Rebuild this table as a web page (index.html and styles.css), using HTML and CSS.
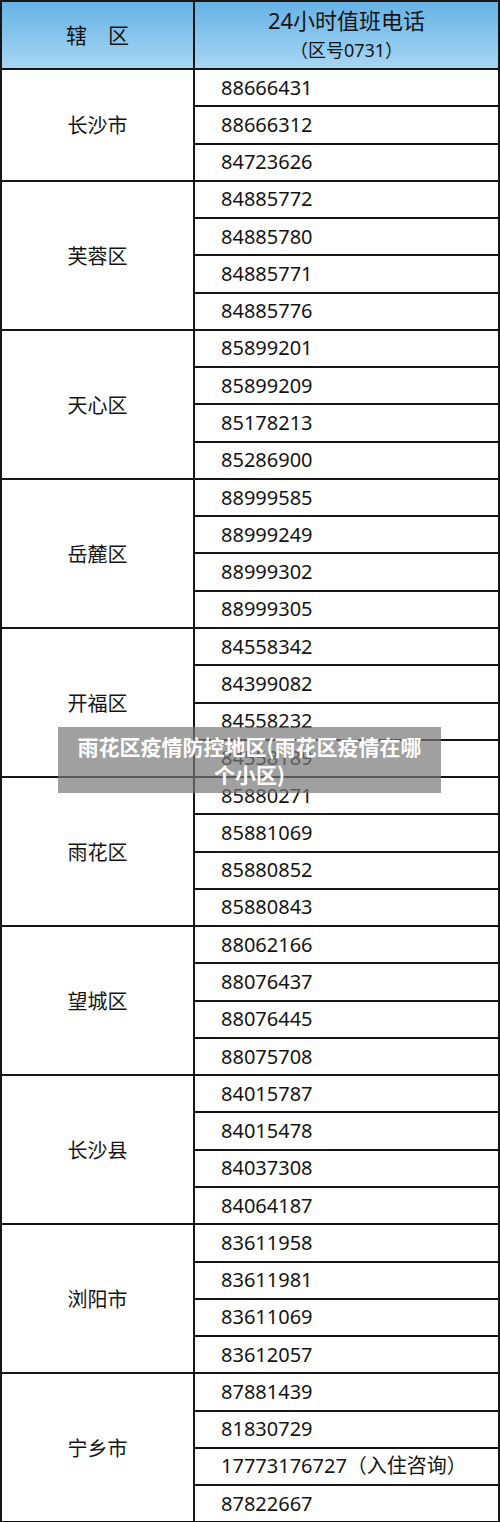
FILE: index.html
```html
<!DOCTYPE html>
<html lang="zh-CN">
<head>
<meta charset="utf-8">
<link rel="stylesheet" href="styles.css">
</head>
<body>
<div class="page">
<table class="hotline">
  <thead>
    <tr class="head-row">
      <th class="col-area">辖　区</th>
      <th class="col-phone"><div class="h1">24小时值班电话</div><div class="h2">（区号0731）</div></th>
    </tr>
  </thead>
  <tbody>
    <tr><td class="area" rowspan="3">长沙市</td><td class="phone">88666431</td></tr>
    <tr><td class="phone">88666312</td></tr>
    <tr><td class="phone">84723626</td></tr>

    <tr><td class="area" rowspan="4">芙蓉区</td><td class="phone">84885772</td></tr>
    <tr><td class="phone">84885780</td></tr>
    <tr><td class="phone">84885771</td></tr>
    <tr><td class="phone">84885776</td></tr>

    <tr><td class="area" rowspan="4">天心区</td><td class="phone">85899201</td></tr>
    <tr><td class="phone">85899209</td></tr>
    <tr><td class="phone">85178213</td></tr>
    <tr><td class="phone">85286900</td></tr>

    <tr><td class="area" rowspan="4">岳麓区</td><td class="phone">88999585</td></tr>
    <tr><td class="phone">88999249</td></tr>
    <tr><td class="phone">88999302</td></tr>
    <tr><td class="phone">88999305</td></tr>

    <tr><td class="area" rowspan="4">开福区</td><td class="phone">84558342</td></tr>
    <tr><td class="phone">84399082</td></tr>
    <tr><td class="phone">84558232</td></tr>
    <tr><td class="phone">84558189</td></tr>

    <tr><td class="area" rowspan="4">雨花区</td><td class="phone">85880271</td></tr>
    <tr><td class="phone">85881069</td></tr>
    <tr><td class="phone">85880852</td></tr>
    <tr><td class="phone">85880843</td></tr>

    <tr><td class="area" rowspan="4">望城区</td><td class="phone">88062166</td></tr>
    <tr><td class="phone">88076437</td></tr>
    <tr><td class="phone">88076445</td></tr>
    <tr><td class="phone">88075708</td></tr>

    <tr><td class="area" rowspan="4">长沙县</td><td class="phone">84015787</td></tr>
    <tr><td class="phone">84015478</td></tr>
    <tr><td class="phone">84037308</td></tr>
    <tr><td class="phone">84064187</td></tr>

    <tr><td class="area" rowspan="4">浏阳市</td><td class="phone">83611958</td></tr>
    <tr><td class="phone">83611981</td></tr>
    <tr><td class="phone">83611069</td></tr>
    <tr><td class="phone">83612057</td></tr>

    <tr><td class="area" rowspan="4">宁乡市</td><td class="phone">87881439</td></tr>
    <tr><td class="phone">81830729</td></tr>
    <tr><td class="phone">17773176727（入住咨询）</td></tr>
    <tr><td class="phone">87822667</td></tr>
  </tbody>
</table>
<div class="caption">雨花区疫情防控地区(雨花区疫情在哪个小区)</div>
</div>
</body>
</html>
```

FILE: styles.css
```css
html, body {
  margin: 0;
  padding: 0;
  background: #ffffff;
}

.page {
  position: relative;
  width: 500px;
  height: 1522px;
  overflow: hidden;
  font-family: "Noto Sans", "Noto Sans CJK SC", sans-serif;
  color: #141414;
}

.hotline {
  width: 500px;
  border-collapse: collapse;
  table-layout: fixed;
  border: 2px solid #161616;
}

.col-area {
  width: 191px;
}

.head-row th {
  height: 66px;
  padding: 0;
  font-weight: normal;
  background: linear-gradient(to bottom, #66b2e5 0%, #a7d6f4 100%);
  border: 2px solid #161616;
  text-align: center;
  vertical-align: middle;
}

.col-area {
  font-size: 21px;
  line-height: 30px;
}

.h1 {
  font-size: 22px;
  line-height: 30px;
}

.h2 {
  font-size: 18px;
  line-height: 30px;
}

td {
  border: 2px solid #161616;
  padding: 0;
}

.area {
  font-size: 20px;
  text-align: center;
  vertical-align: middle;
}

.phone {
  height: 35.28px;
  font-size: 20px;
  line-height: 24px;
  padding-left: 26px;
  text-align: left;
  vertical-align: middle;
  white-space: nowrap;
}

.caption {
  position: absolute;
  left: 58px;
  top: 727px;
  width: 383px;
  box-sizing: border-box;
  padding: 5px 10px;
  background: rgba(119, 119, 119, 0.7);
  color: #ffffff;
  font-family: "Noto Sans CJK SC", sans-serif;
  font-weight: bold;
  font-size: 21px;
  line-height: 28px;
  text-align: center;
}
```
